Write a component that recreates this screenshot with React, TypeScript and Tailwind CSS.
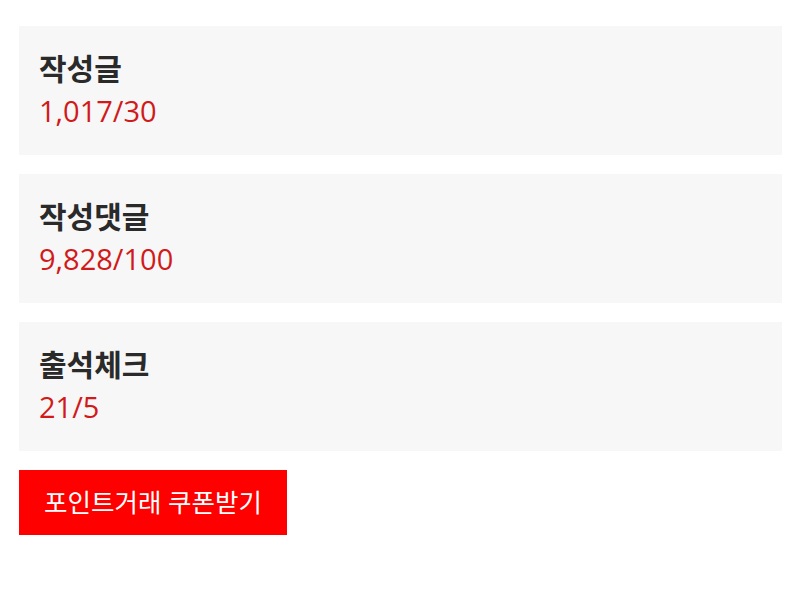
import React from 'react';

const stats = [
  { label: '작성글', value: '1,017/30' },
  { label: '작성댓글', value: '9,828/100' },
  { label: '출석체크', value: '21/5' },
];

export default function App() {
  return (
    <div
      className="w-[800px] h-[589px] bg-white pl-[19px] pr-[18px] pt-[26px]"
      style={{ fontFamily: '"Open Sans", "Noto Sans CJK KR", sans-serif' }}
    >
      <div className="flex flex-col gap-[19px]">
        {stats.map((s) => (
          <div key={s.label} className="bg-[#f7f7f7] h-[129px] px-[20px] pt-[21px]">
            <div className="text-[30px] leading-[43px] font-bold text-[#2a2a2a]">{s.label}</div>
            <div className="text-[29px] leading-[42px] text-[#d11a1a]">{s.value}</div>
          </div>
        ))}
      </div>
      <button className="mt-[19px] w-[268px] h-[65px] bg-[#ff0000] text-white text-[25.5px] flex items-center justify-center">
        포인트거래 쿠폰받기
      </button>
    </div>
  );
}
